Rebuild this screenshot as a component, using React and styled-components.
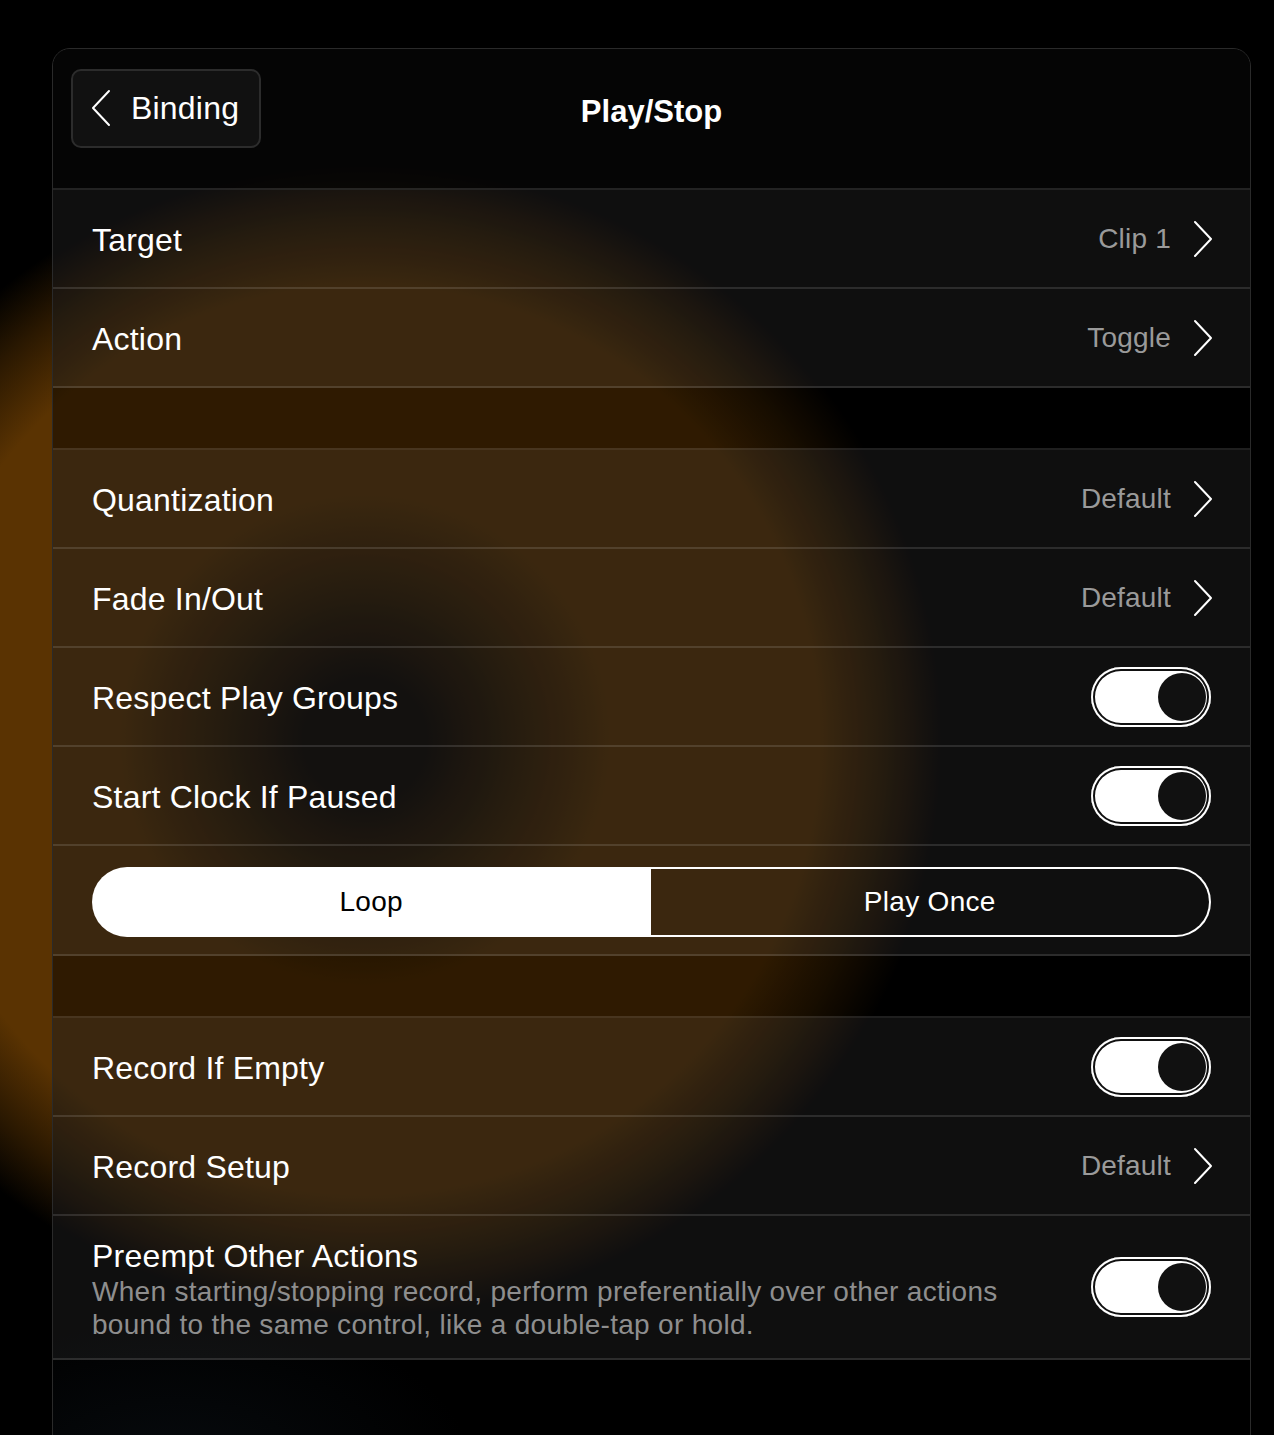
import React from "react";
import styled, { createGlobalStyle } from "styled-components";

const GlobalStyle = createGlobalStyle`
  html, body {
    margin: 0;
    padding: 0;
    height: 1435px;
    overflow: hidden;
    background-color: #000;
    background-image: radial-gradient(
      circle at 365px 740px,
      #0a0601 0px,
      #0a0601 60px,
      #5a3302 245px,
      #5a3302 455px,
      #2a1801 525px,
      #000 580px
    );
    font-family: "Liberation Sans", Arial, sans-serif;
    color: #fff;
  }
`;

const Panel = styled.div`
  box-sizing: border-box;
  margin: 48px 0 0 52px;
  width: 1199px;
  min-height: 1420px;
  border: 1px solid #2a2a2a;
  border-radius: 18px;
  background-color: rgba(0, 0, 0, 0.48);
  background-image: radial-gradient(
    ellipse 300px 160px at 120px 1420px,
    rgba(20, 30, 40, 0.35),
    transparent
  );
  overflow: hidden;
`;

const Header = styled.header`
  position: relative;
  height: 139px;
  display: flex;
  align-items: center;
  padding: 0 18px;
  border-bottom: 2px solid rgba(255, 255, 255, 0.12);
  background: rgba(8, 8, 8, 0.6);
`;

const BackButton = styled.button`
  display: flex;
  align-items: center;
  gap: 20px;
  height: 79px;
  width: 190px;
  margin-top: -21px;
  padding: 0 0 0 18px;
  box-sizing: border-box;
  background: #111;
  border: 2px solid #2c2c2c;
  border-radius: 10px;
  color: #fff;
  font-family: "Liberation Sans", Arial, sans-serif;
  font-size: 32px;
  letter-spacing: 0.2px;
  cursor: pointer;
`;

const Title = styled.h1`
  position: absolute;
  left: 0;
  right: 0;
  top: 45px;
  margin: 0;
  text-align: center;
  font-size: 31px;
  font-weight: 700;
  pointer-events: none;
`;

const Group = styled.section`
  background: rgba(255, 255, 255, 0.06);
`;

const Spacer = styled.div`
  height: 60px;
  border-bottom: 2px solid rgba(255, 255, 255, 0.12);
`;

const Row = styled.div`
  box-sizing: border-box;
  display: flex;
  align-items: center;
  justify-content: space-between;
  min-height: ${(p) => p.height || 99}px;
  padding: 3px 39px 0 39px;
  border-bottom: 2px solid rgba(255, 255, 255, 0.12);
`;

const TextBlock = styled.div`
  display: flex;
  flex-direction: column;
  max-width: 960px;
`;

const Label = styled.span`
  font-size: 32px;
  line-height: 38px;
  letter-spacing: 0.2px;
  color: #fff;
`;

const Description = styled.span`
  font-size: 28px;
  line-height: 33px;
  letter-spacing: 0.3px;
  color: #8e8e8e;
`;

const Value = styled.div`
  display: flex;
  align-items: center;
  gap: 22px;
  font-size: 28px;
  letter-spacing: 0.2px;
  color: #9a9a9a;
  margin-top: -3px;
  margin-right: -2px;
`;

const Toggle = styled.span`
  box-sizing: border-box;
  display: flex;
  justify-content: flex-end;
  align-items: center;
  width: 120px;
  height: 60px;
  margin-top: -3px;
  padding: 0 5px;
  border-radius: 30px;
  background: #fff;
  box-shadow: inset 0 0 0 2px #fff, inset 0 0 0 4px #111;
`;

const Knob = styled.span`
  width: 48px;
  height: 48px;
  border-radius: 50%;
  background: #111;
`;

const SegmentRow = styled.div`
  box-sizing: border-box;
  height: 110px;
  padding: 21px 39px 0;
  border-bottom: 2px solid rgba(255, 255, 255, 0.12);
`;

const Segmented = styled.div`
  display: flex;
  height: 70px;
`;

const Segment = styled.div`
  box-sizing: border-box;
  flex: 1;
  display: flex;
  align-items: center;
  justify-content: center;
  font-size: 28px;
  letter-spacing: 0.3px;
  ${(p) =>
    p.active
      ? `background: #fff; color: #000; border-radius: 35px 0 0 35px;`
      : `color: #fff; border: 2px solid #fff; border-left-width: 0; border-radius: 0 35px 35px 0;`}
`;

const Chevron = ({ left }) => (
  <svg width="20" height="38" viewBox="0 0 20 38" fill="none">
    <polyline
      points={left ? "18,2 2,19 18,36" : "2,2 18,19 2,36"}
      stroke="#fff"
      strokeWidth="2"
      strokeLinecap="round"
      strokeLinejoin="round"
    />
  </svg>
);

const Switch = () => (
  <Toggle>
    <Knob />
  </Toggle>
);

const LinkRow = ({ label, value }) => (
  <Row>
    <Label>{label}</Label>
    <Value>
      {value}
      <Chevron />
    </Value>
  </Row>
);

const SwitchRow = ({ label, description, height }) => (
  <Row height={height}>
    <TextBlock>
      <Label>{label}</Label>
      {description && <Description>{description}</Description>}
    </TextBlock>
    <Switch />
  </Row>
);

export default function App() {
  return (
    <>
      <GlobalStyle />
      <Panel>
        <Header>
          <BackButton>
            <Chevron left />
            Binding
          </BackButton>
          <Title>Play/Stop</Title>
        </Header>
        <Group>
          <LinkRow label="Target" value="Clip 1" />
          <LinkRow label="Action" value="Toggle" />
        </Group>
        <Spacer />
        <Group>
          <LinkRow label="Quantization" value="Default" />
          <LinkRow label="Fade In/Out" value="Default" />
          <SwitchRow label="Respect Play Groups" />
          <SwitchRow label="Start Clock If Paused" />
          <SegmentRow>
            <Segmented>
              <Segment active>Loop</Segment>
              <Segment>Play Once</Segment>
            </Segmented>
          </SegmentRow>
        </Group>
        <Spacer />
        <Group>
          <SwitchRow label="Record If Empty" />
          <LinkRow label="Record Setup" value="Default" />
          <SwitchRow
            height={144}
            label="Preempt Other Actions"
            description="When starting/stopping record, perform preferentially over other actions bound to the same control, like a double-tap or hold."
          />
        </Group>
      </Panel>
    </>
  );
}
